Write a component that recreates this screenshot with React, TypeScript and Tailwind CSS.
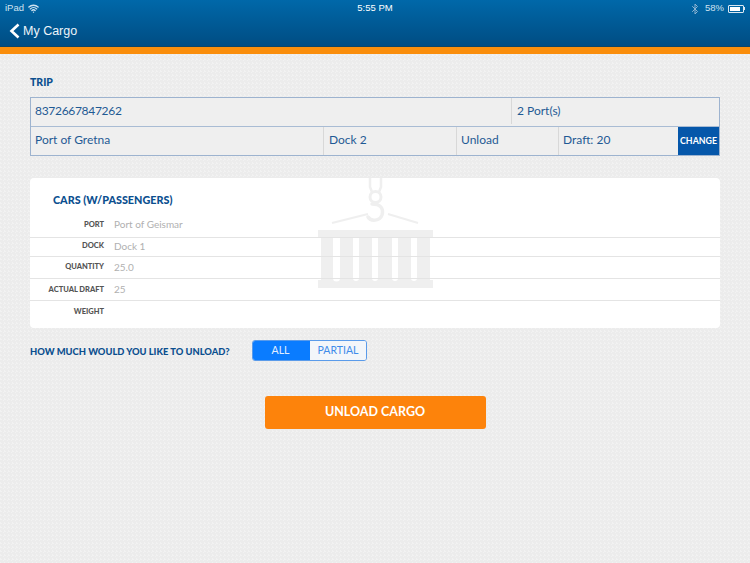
import { Bluetooth, Wifi } from "lucide-react";

const rows = [
  { label: "PORT", value: "Port of Geismar", row: "h-[30px] pt-[4px] border-b border-[#e4e4e4]" },
  { label: "DOCK", value: "Dock 1", row: "h-[19px] pb-[2px] border-b border-[#e4e4e4]" },
  { label: "QUANTITY", value: "25.0", row: "h-[22px] pb-[1px] border-b border-[#e4e4e4]" },
  { label: "ACTUAL DRAFT", value: "25", row: "h-[22px] border-b border-[#e4e4e4]" },
  { label: "WEIGHT", value: "", row: "h-[27px] pb-[5px]" },
];

const CraneMark = () => (
  <svg
    className="absolute left-[288px] top-0"
    width="116"
    height="112"
    viewBox="0 0 116 112"
    fill="none"
  >
    <path d="M52 0v9l2 5M63 0v9l-2 5" stroke="#efefef" strokeWidth="2.5" />
    <circle cx="57.5" cy="19" r="5.5" stroke="#efefef" strokeWidth="3" />
    <path
      d="M54 26c8 0 12 4 10 11-2 6-11 7-14 2"
      stroke="#efefef"
      strokeWidth="3.5"
      strokeLinecap="round"
    />
    <path d="M14 45l36-9M70 36l30 9" stroke="#efefef" strokeWidth="2" />
    <path
      fillRule="evenodd"
      clipRule="evenodd"
      d="M0 52h115v8h-3v42h3v8H0v-8h3V60H0zM15 59v41a3.5 3.5 0 0 0 7 0V59zM35 59v41a3 3 0 0 0 6 0V59zM54 59v41a3 3 0 0 0 6 0V59zM74 59v41a3 3 0 0 0 6 0V59zM93 59v41a3 3 0 0 0 6 0V59z"
      fill="#efefef"
    />
  </svg>
);

const App = () => {
  return (
    <div className="w-[750px] h-[563px] overflow-hidden font-['Lato',sans-serif] bg-[#ececec] bg-[linear-gradient(45deg,rgba(255,255,255,0.3)_25%,transparent_25%,transparent_75%,rgba(255,255,255,0.3)_75%)] bg-[length:4px_4px]">
      <header className="h-[54px] border-b-[7px] border-[#fa8e0c] bg-[linear-gradient(#0068a9,#004c82)] text-white">
        <div className="h-[16px] pt-[1px] px-[5px] flex items-center justify-between text-[9.5px] font-['Liberation_Sans',sans-serif] text-[#cfe2f0]">
          <div className="flex items-center gap-[4px] w-[200px]">
            <span>iPad</span>
            <Wifi size={11} strokeWidth={3} />
          </div>
          <span className="text-white">5:55 PM</span>
          <div className="flex items-center justify-end gap-[4px] w-[200px]">
            <Bluetooth size={12} className="text-[#8fb5d2]" />
            <span>58%</span>
            <div className="flex items-center">
              <div className="w-[16px] h-[8px] border border-[#dbe8f2] rounded-[1px] p-px">
                <div className="w-[10px] h-full bg-white" />
              </div>
              <div className="w-px h-[3px] bg-[#dbe8f2]" />
            </div>
          </div>
        </div>
        <div className="h-[31px] flex items-center pl-[9px] border-b border-[#0f4566]">
          <svg width="11" height="16" viewBox="0 0 11 16" fill="none">
            <path d="M9.5 1.5 2.5 8l7 6.5" stroke="#ffffff" strokeWidth="2.6" />
          </svg>
          <span className="text-[12.5px] ml-[3px] font-['Liberation_Sans',sans-serif] text-[#eef5fa]">My Cargo</span>
        </div>
      </header>

      <main className="px-[30px] pt-[22px]">
        <h2 className="text-[10.5px] leading-[13px] font-black text-[#0b4f8f] mb-[8px]">TRIP</h2>

        <div className="border border-[#9db3cf] text-[12px] text-[#1f5a94] bg-[#efefef]">
          <div className="flex h-[29px] pb-[2px] border-b border-[#a9bcd4]">
            <div className="w-[480px] px-[4px] flex items-center tracking-[-0.3px]">8372667847262</div>
            <div className="flex-1 px-[5px] flex items-center border-l border-[#d8d8d8]">2 Port(s)</div>
          </div>
          <div className="flex h-[28px]">
            <div className="w-[293px] px-[4px] pb-[2px] flex items-center border-r border-[#d8d8d8]">Port of Gretna</div>
            <div className="w-[133px] px-[5px] pb-[2px] flex items-center border-r border-[#d8d8d8]">Dock 2</div>
            <div className="w-[102px] px-[4px] pb-[2px] flex items-center border-r border-[#d8d8d8]">Unload</div>
            <div className="w-[119px] px-[4px] pb-[2px] flex items-center">Draft: 20</div>
            <div className="flex-1 bg-[#0557aa] text-white font-bold text-[8.8px] flex items-center justify-center">CHANGE</div>
          </div>
        </div>

        <section className="relative mt-[22px] h-[150px] bg-white rounded-[4px] overflow-hidden">
          <CraneMark />
          <h3 className="relative pl-[23px] pt-[15px] h-[30px] text-[10.8px] leading-[14px] font-black text-[#0b4f8f]">
            CARS (W/PASSENGERS)
          </h3>
          <div className="relative">
            {rows.map((row) => (
              <div key={row.label} className={`flex items-center ${row.row}`}>
                <span className="w-[74px] text-right text-[7.5px] font-black text-[#555555]">{row.label}</span>
                <span className="ml-[10px] text-[10px] text-[#b0b0b0]">{row.value}</span>
              </div>
            ))}
          </div>
        </section>

        <div className="flex items-center mt-[12px]">
          <span className="w-[222px] text-[9.35px] font-black text-[#0b4f8f] pt-[3px]">HOW MUCH WOULD YOU LIKE TO UNLOAD?</span>
          <div className="flex w-[115px] h-[21px] border border-[#5a9bea] rounded-[3px] overflow-hidden text-[10.5px]">
            <div className="w-[57px] bg-[#0a7cff] text-[#e2efff] flex items-center justify-center pr-[2px]">ALL</div>
            <div className="flex-1 bg-[#f3f6fa] text-[#3f8cea] flex items-center justify-center">PARTIAL</div>
          </div>
        </div>

        <button className="block mx-auto mt-[35px] w-[221px] h-[33px] rounded-[3px] bg-[#fd830b] text-white text-[12.5px] font-bold">
          UNLOAD CARGO
        </button>
      </main>
    </div>
  );
};

export default App;
